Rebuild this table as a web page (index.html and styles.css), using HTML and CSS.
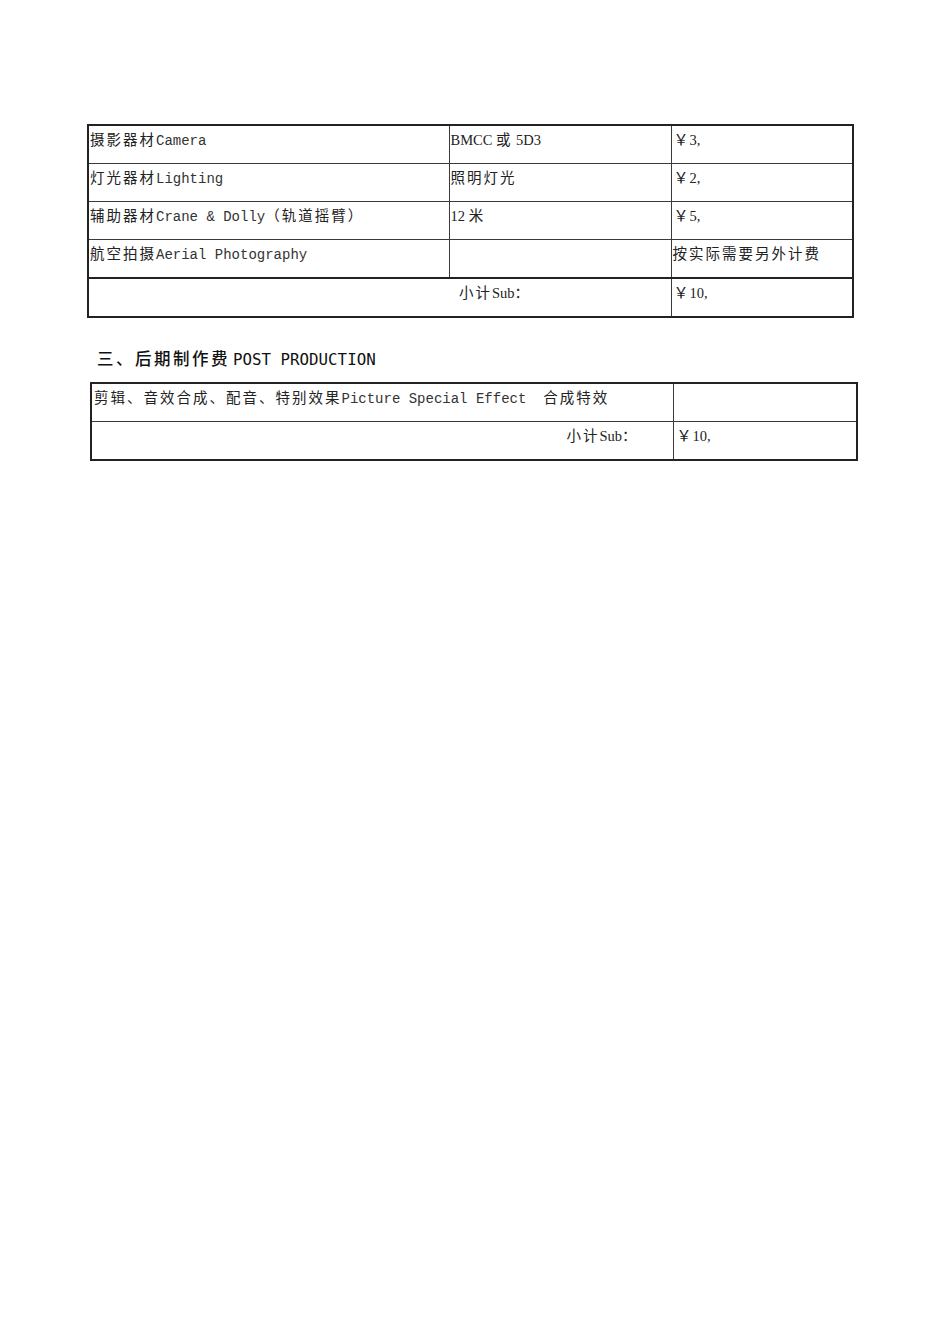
FILE: index.html
```html
<!DOCTYPE html>
<html lang="zh-CN">
<head>
<meta charset="utf-8">
<title>后期制作费</title>
<link rel="stylesheet" href="styles.css">
</head>
<body>
<div class="page">
  <table class="grid grid-one">
    <colgroup>
      <col class="c1"><col class="c2"><col class="c3">
    </colgroup>
    <tr>
      <td><span class="cjk">摄影器材</span><span class="mono">Camera</span></td>
      <td><span class="serif">BMCC</span> <span class="cjk">或</span><span class="serif"> 5D3</span></td>
      <td><span class="yen">￥</span><span class="serif">3,</span></td>
    </tr>
    <tr>
      <td><span class="cjk">灯光器材</span><span class="mono">Lighting</span></td>
      <td><span class="cjk">照明灯光</span></td>
      <td><span class="yen">￥</span><span class="serif">2,</span></td>
    </tr>
    <tr>
      <td><span class="cjk">辅助器材</span><span class="mono">Crane &amp; Dolly</span><span class="cjk">（轨道摇臂）</span></td>
      <td><span class="serif">12 </span><span class="cjk">米</span></td>
      <td><span class="yen">￥</span><span class="serif">5,</span></td>
    </tr>
    <tr class="before-total">
      <td><span class="cjk">航空拍摄</span><span class="mono">Aerial Photography</span></td>
      <td></td>
      <td><span class="cjk">按实际需要另外计费</span></td>
    </tr>
    <tr>
      <td colspan="2" class="sub-one"><span class="cjk">小计</span><span class="serif">Sub</span><span class="cjk">：</span></td>
      <td><span class="yen">￥</span><span class="serif">10,</span></td>
    </tr>
  </table>

  <h2 class="section-title"><span class="title-cjk">三、后期制作费</span><span class="title-latin">POST PRODUCTION</span></h2>

  <table class="grid grid-two">
    <colgroup>
      <col class="d1"><col class="d2">
    </colgroup>
    <tr>
      <td><span class="cjk">剪辑、音效合成、配音、特别效果</span><span class="mono">Picture Special Effect  </span><span class="cjk">合成特效</span></td>
      <td></td>
    </tr>
    <tr>
      <td class="sub-two"><span class="cjk">小计</span><span class="serif">Sub</span><span class="cjk">：</span></td>
      <td><span class="yen">￥</span><span class="serif">10,</span></td>
    </tr>
  </table>
</div>
</body>
</html>
```

FILE: styles.css
```css
html, body {
  margin: 0;
  padding: 0;
  background: #ffffff;
}

body {
  width: 950px;
  height: 1344px;
  color: #1a1a1a;
  font-family: "Liberation Serif", "Noto Sans CJK SC", serif;
}

.page {
  padding: 124px 0 0 87px;
}

.grid {
  border-collapse: collapse;
  table-layout: fixed;
  border: 2px solid #222222;
}

.grid td {
  border: 1px solid #3a3a3a;
  height: 34px;
  padding: 3px 0 0 1px;
  vertical-align: top;
  white-space: pre;
  font-size: 14px;
  line-height: 20px;
  overflow: hidden;
}

.grid-one {
  width: 765px;
}

.grid-one .c1 { width: 361px; }
.grid-one .c2 { width: 222px; }
.grid-one .c3 { width: 182px; }

.grid-one tr.before-total td {
  border-bottom: 2px solid #222222;
}

.grid-one .sub-one {
  padding-left: 370px;
}

.grid-two {
  width: 766px;
  margin-left: 3px;
}

.grid-two .d1 { width: 582px; }
.grid-two .d2 { width: 184px; }

.grid-two td {
  padding-left: 2px;
}

.grid-two .sub-two {
  text-align: right;
  padding-right: 34px;
}

.cjk {
  font-family: "Noto Sans CJK SC", sans-serif;
  font-size: 14.5px;
  letter-spacing: 2px;
  color: #222222;
}

.yen {
  display: inline-block;
  width: 17px;
  font-family: "Noto Sans CJK SC", sans-serif;
  font-size: 15px;
  text-align: center;
  color: #222222;
}

.mono {
  font-family: "Liberation Mono", "Courier New", "Nimbus Mono PS", monospace;
  font-size: 14px;
  color: #333333;
}

.serif {
  font-family: "Liberation Serif", serif;
  font-size: 14.5px;
  color: #222222;
}

.section-title {
  margin: 27px 0 13px 10px;
  height: 24px;
  font-weight: normal;
  line-height: 24px;
  white-space: pre;
}

.title-cjk {
  font-family: "Noto Sans CJK SC", sans-serif;
  font-size: 16.5px;
  font-weight: 500;
  letter-spacing: 2.5px;
  color: #111111;
}

.title-latin {
  font-family: "DejaVu Sans Mono", monospace;
  font-size: 15.8px;
  margin-left: 3px;
  color: #111111;
}
```
